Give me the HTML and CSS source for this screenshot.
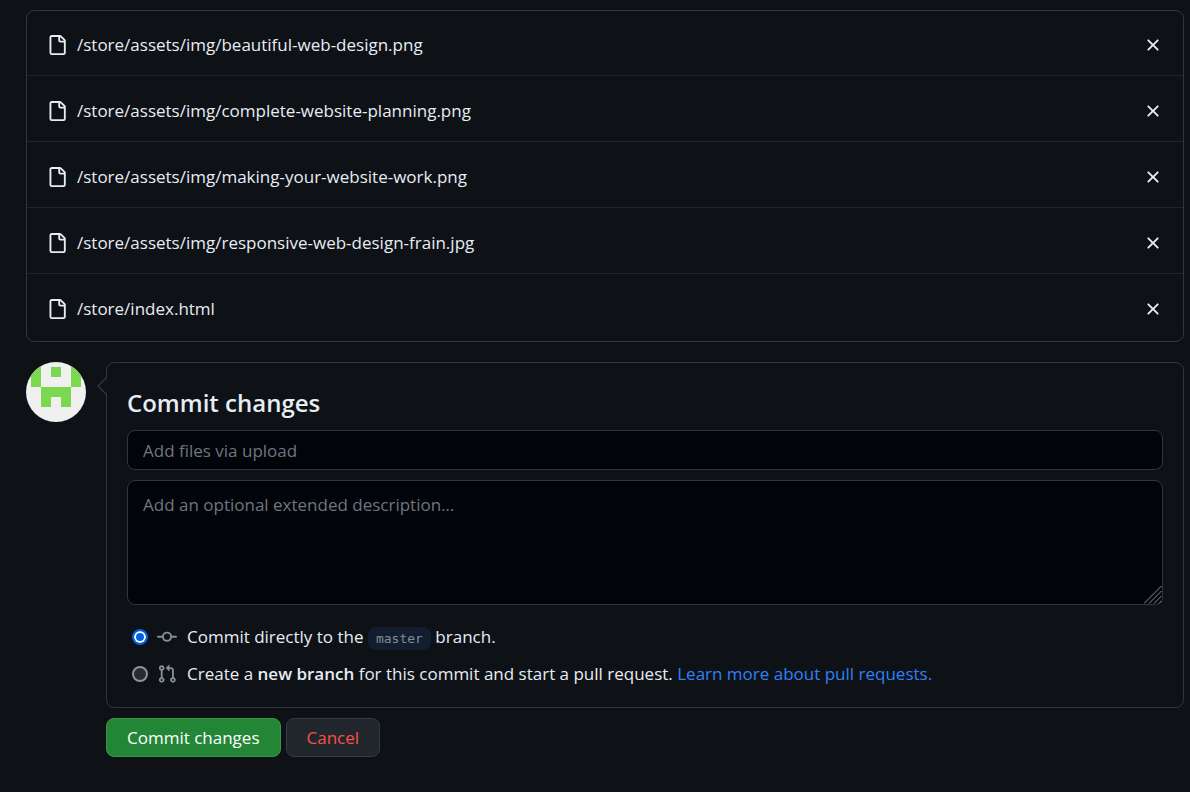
FILE: index.html
```html
<!DOCTYPE html>
<html lang="en">
<head>
<meta charset="utf-8">
<meta name="viewport" content="width=device-width, initial-scale=1">
<title>Upload files</title>
<link rel="stylesheet" href="styles.css">
</head>
<body>
<svg class="sprite" aria-hidden="true">
  <symbol id="file" viewBox="0 0 16 16"><path d="M2 1.75C2 .784 2.784 0 3.75 0h6.586c.464 0 .909.184 1.237.513l2.914 2.914c.329.328.513.773.513 1.237v9.586A1.75 1.75 0 0 1 13.25 16h-9.500A1.75 1.75 0 0 1 2 14.250Zm1.750-.25a.25.25 0 0 0-.25.25v12.500c0 .138.112.25.25.25h9.500a.25.25 0 0 0 .25-.25V6h-2.750A1.750 1.750 0 0 1 9 4.250V1.500Zm6.750.062V4.250c0 .138.112.25.25.25h2.688l-.011-.013-2.914-2.914-.013-.011Z"/></symbol>
  <symbol id="x" viewBox="0 0 16 16"><path d="M3.720 3.720a.75.75 0 0 1 1.060 0L8 6.940l3.220-3.220a.75.75 0 1 1 1.060 1.060L9.060 8l3.220 3.220a.75.75 0 1 1-1.060 1.060L8 9.060l-3.220 3.220a.75.75 0 0 1-1.060-1.060L6.940 8 3.720 4.780a.75.75 0 0 1 0-1.060Z"/></symbol>
</svg>
<main class="upload">
  <ul class="files">
    <li class="file"><svg class="icon"><use href="#file"/></svg><span class="file-name">/store/assets/img/beautiful-web-design.png</span><button class="remove" type="button" aria-label="Remove file"><svg class="icon"><use href="#x"/></svg></button></li>
    <li class="file"><svg class="icon"><use href="#file"/></svg><span class="file-name">/store/assets/img/complete-website-planning.png</span><button class="remove" type="button" aria-label="Remove file"><svg class="icon"><use href="#x"/></svg></button></li>
    <li class="file"><svg class="icon"><use href="#file"/></svg><span class="file-name">/store/assets/img/making-your-website-work.png</span><button class="remove" type="button" aria-label="Remove file"><svg class="icon"><use href="#x"/></svg></button></li>
    <li class="file"><svg class="icon"><use href="#file"/></svg><span class="file-name">/store/assets/img/responsive-web-design-frain.jpg</span><button class="remove" type="button" aria-label="Remove file"><svg class="icon"><use href="#x"/></svg></button></li>
    <li class="file"><svg class="icon"><use href="#file"/></svg><span class="file-name">/store/index.html</span><button class="remove" type="button" aria-label="Remove file"><svg class="icon"><use href="#x"/></svg></button></li>
  </ul>
  <form class="commit">
    <svg class="avatar" viewBox="0 0 60 60" role="img" aria-label="Your avatar" shape-rendering="crispEdges">
      <rect width="60" height="60" fill="#f0f0f0"/>
      <path fill="#7ad851" d="M5 5h10v20H5zM45 5h10v20H45zM25 5h10v10H25zM15 25h30v20H35V35H25v10H15z"/>
    </svg>
    <div class="commit-main">
      <div class="panel">
        <svg class="caret" viewBox="0 0 10 18" aria-hidden="true"><path d="M10 0 1 9l9 9" fill="#0e1116" stroke="#30363d" stroke-width="1.500"/></svg>
        <h2 class="title">Commit changes</h2>
        <input class="field" type="text" placeholder="Add files via upload" aria-label="Commit summary">
        <div class="description">
          <textarea class="field field-area" placeholder="Add an optional extended description…" aria-label="Commit description"></textarea>
          <svg class="grip" viewBox="0 0 18 18" aria-hidden="true"><path d="M0 17.500 17.500 0M5 17.500 17.500 5M10 17.500l7.500-7.500M15 17.500l2.500-2.500"/></svg>
        </div>
        <div class="choices">
          <label class="choice">
            <input class="radio" type="radio" name="target" checked>
            <svg class="icon" viewBox="0 0 16 16"><path d="M11.930 8.500a4.002 4.002 0 0 1-7.860 0H.750a.75.75 0 0 1 0-1.500h3.320a4.002 4.002 0 0 1 7.860 0h3.320a.75.75 0 0 1 0 1.500Zm-1.430-.75a2.500 2.500 0 1 0-5 0 2.500 2.500 0 0 0 5 0Z"/></svg>
            <span>Commit directly to the <code class="branch">master</code> branch.</span>
          </label>
          <div class="choice">
            <input class="radio" type="radio" name="target" id="new-branch">
            <svg class="icon" viewBox="0 0 16 16"><path d="M1.500 3.250a2.250 2.250 0 1 1 3 2.122v5.256a2.251 2.251 0 1 1-1.500 0V5.372A2.250 2.250 0 0 1 1.500 3.250Zm5.677-.177L9.573.677A.25.25 0 0 1 10 .854V2.500h1A2.500 2.500 0 0 1 13.500 5v5.628a2.251 2.251 0 1 1-1.500 0V5a1 1 0 0 0-1-1h-1v1.646a.25.25 0 0 1-.427.177L7.177 3.427a.25.25 0 0 1 0-.354ZM3.750 2.500a.75.75 0 1 0 0 1.500.75.75 0 0 0 0-1.500Zm0 9.500a.75.75 0 1 0 0 1.500.75.75 0 0 0 0-1.500Zm8.250.75a.75.75 0 1 0 1.500 0 .75.75 0 0 0-1.500 0Z"/></svg>
            <span><label for="new-branch">Create a <strong>new branch</strong> for this commit and start a pull request.</label> <a class="link" href="#">Learn more about pull requests.</a></span>
          </div>
        </div>
      </div>
      <div class="actions">
        <button class="btn btn-primary" type="submit">Commit changes</button>
        <button class="btn btn-danger" type="button">Cancel</button>
      </div>
    </div>
  </form>
</main>
</body>
</html>
```
FILE: styles.css
```css
* { box-sizing: border-box; }
body {
  margin: 0;
  background: #0e1116;
  color: #e6edf3;
  font: 17px/26px "Open Sans", "Noto Sans", sans-serif;
}
strong { font-weight: 600; }
.sprite { position: absolute; width: 0; height: 0; }
.upload { padding: 10px 6px 32px 26px; }
.icon { width: 20px; height: 20px; flex: none; fill: currentColor; }

.files {
  margin: 0 0 20px;
  padding: 0;
  list-style: none;
  border: 1px solid #30363d;
  border-radius: 8px;
}
.file {
  display: flex;
  align-items: center;
  gap: 10px;
  padding: 22px 20px 17px;
}
.file + .file { border-top: 1px solid #21262d; }
.file:first-child { padding-top: 21px; }
.file:last-child { padding-bottom: 19px; }
.file-name { flex: 1; overflow-wrap: anywhere; }
.remove {
  display: flex;
  padding: 0;
  border: 0;
  background: none;
  color: inherit;
  cursor: pointer;
}

.commit { display: flex; gap: 20px; align-items: flex-start; }
.avatar { width: 60px; height: 60px; flex: none; border-radius: 50%; }
.commit-main { flex: 1; min-width: 0; }
.panel {
  position: relative;
  padding: 20px;
  border: 1px solid #30363d;
  border-radius: 8px;
}
.caret { position: absolute; left: -10px; top: 14px; width: 10px; height: 18px; }
.title { margin: 0 0 7px; font-size: 24px; line-height: 40px; font-weight: 600; }
.field {
  display: block;
  width: 100%;
  height: 40px;
  padding: 6px 15px;
  border: 1px solid #30363d;
  border-radius: 8px;
  background: #010409;
  color: inherit;
  font: inherit;
}
.field::placeholder { color: #6e7681; opacity: 1; }
.description { position: relative; margin-top: 10px; }
.field-area { height: 125px; padding: 11px 15px; resize: none; }
.grip {
  position: absolute;
  right: 1px;
  bottom: 1px;
  width: 18px;
  height: 18px;
  fill: none;
  stroke: #8b8b8b;
  pointer-events: none;
}
.choices { display: grid; gap: 11px; margin-top: 19px; }
.choice { display: flex; align-items: center; }
.choice .icon { margin: 0 10px 0 9px; color: #848d97; }
.radio {
  appearance: none;
  flex: none;
  width: 16px;
  height: 16px;
  margin: 0 0 0 5px;
  border: 2px solid #8f8f9d;
  border-radius: 50%;
  background: #2b2a33;
}
.radio:checked {
  border-color: #0060df;
  background: #0060df;
  box-shadow: inset 0 0 0 2px #fff;
}
.branch {
  padding: 4px 8px;
  border-radius: 8px;
  background: #121d2f;
  color: #848d97;
  font: 13px/15px "DejaVu Sans Mono", monospace;
}
.link { color: #2f81f7; text-decoration: none; }
.actions { display: flex; gap: 5px; margin-top: 10px; }
.btn {
  padding: 6px 20px;
  border: 1px solid #363b42;
  border-radius: 8px;
  font: inherit;
  line-height: 25px;
  cursor: pointer;
}
.btn-primary { background: #238636; border-color: #3a9549; color: #fff; }
.btn-danger { background: #21262d; color: #f85149; }
```
